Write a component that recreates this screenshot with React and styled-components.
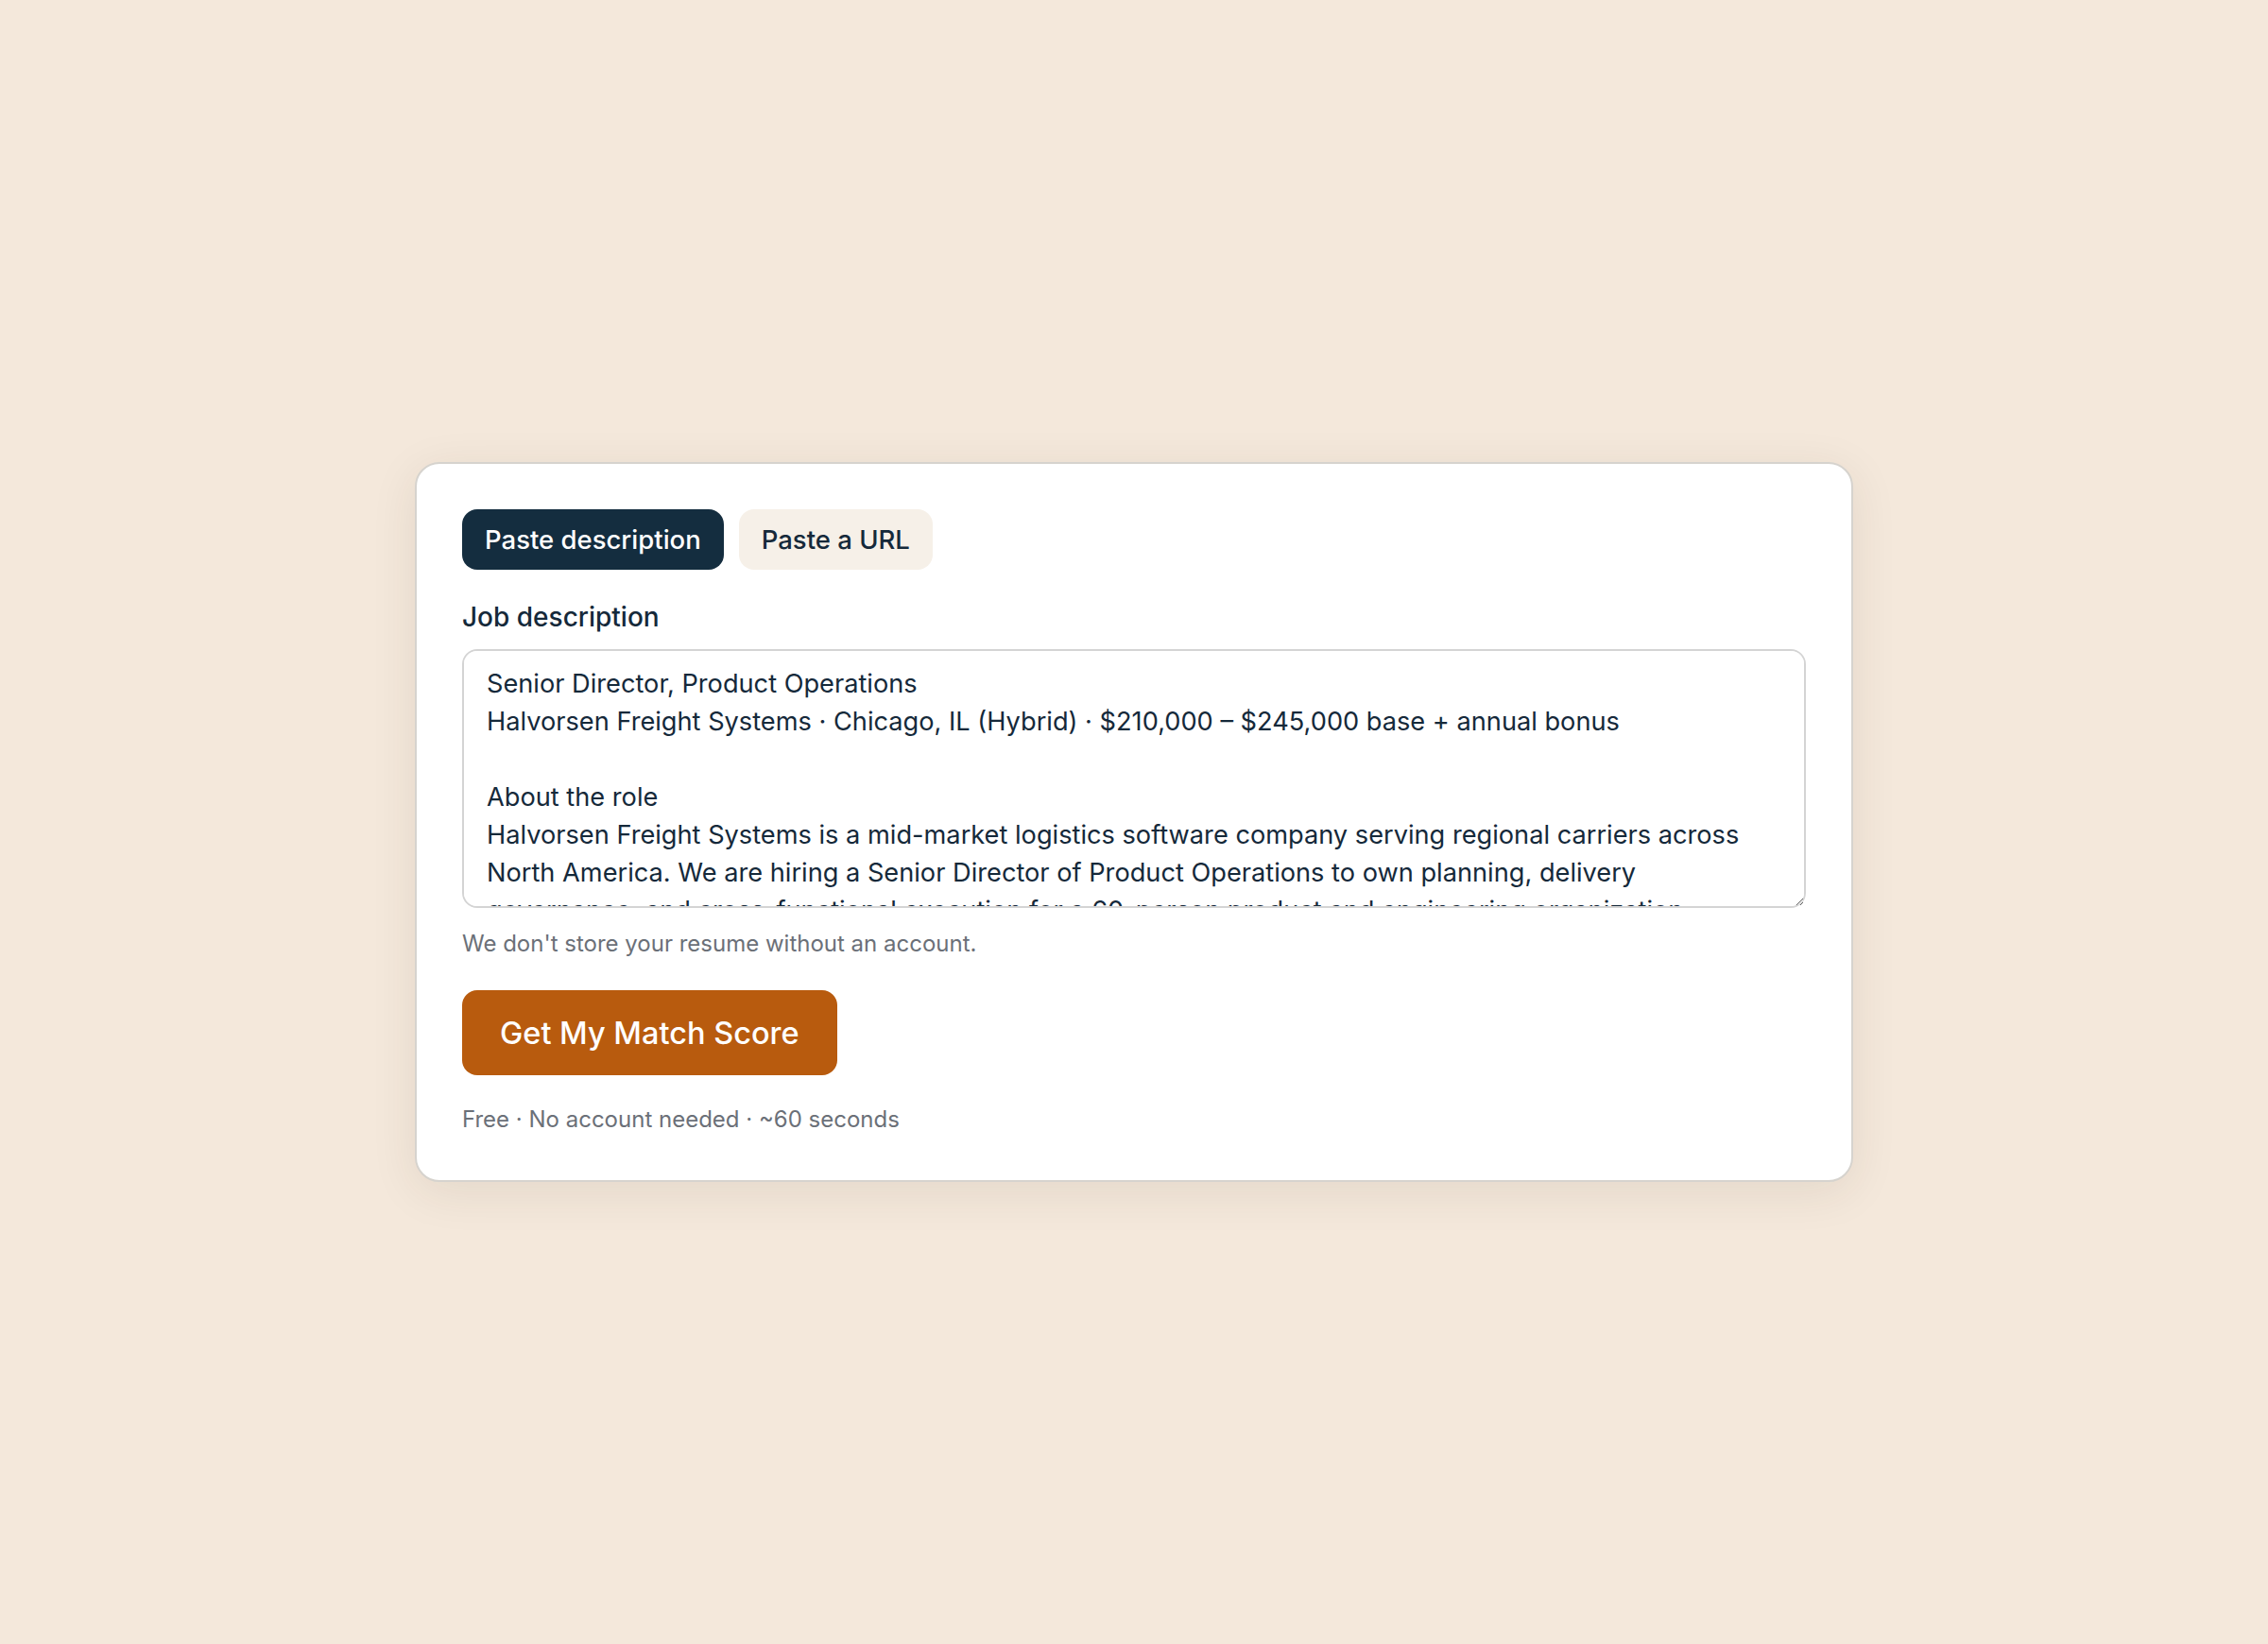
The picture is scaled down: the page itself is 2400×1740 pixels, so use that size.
import React, { useState } from 'react';
import styled, { createGlobalStyle } from 'styled-components';

const GlobalStyle = createGlobalStyle`
  * {
    box-sizing: border-box;
  }

  body {
    margin: 0;
    background: #f4e8db;
    font-family: Inter, 'Noto Sans', 'Liberation Sans', sans-serif;
    color: #15293a;
  }
`;

const JOB_TEXT = `Senior Director, Product Operations
Halvorsen Freight Systems · Chicago, IL (Hybrid) · $210,000 – $245,000 base + annual bonus

About the role
Halvorsen Freight Systems is a mid-market logistics software company serving regional carriers across North America. We are hiring a Senior Director of Product Operations to own planning, delivery governance, and cross-functional execution for a 60-person product and engineering organization.

What you'll do
- Run quarterly planning and roadmap reviews with product, engineering and go-to-market leaders
- Build the operating cadence, metrics and tooling that keep delivery predictable
- Lead a team of program managers and product ops analysts`;

function App() {
  const [mode, setMode] = useState('paste');
  const [description, setDescription] = useState(JOB_TEXT);

  return (
    <Page>
      <GlobalStyle />
      <Card>
        <Tabs>
          <Tab $active={mode === 'paste'} onClick={() => setMode('paste')}>
            Paste description
          </Tab>
          <Tab $active={mode === 'url'} onClick={() => setMode('url')}>
            Paste a URL
          </Tab>
        </Tabs>

        <Label htmlFor="job-description">Job description</Label>
        <JobInput
          id="job-description"
          value={description}
          onChange={(e) => setDescription(e.target.value)}
        />
        <Hint>We don't store your resume without an account.</Hint>

        <SubmitButton type="button">Get My Match Score</SubmitButton>
        <Footnote>Free · No account needed · ~60 seconds</Footnote>
      </Card>
    </Page>
  );
}

const Page = styled.div`
  min-height: 100vh;
  display: flex;
  align-items: center;
  justify-content: center;
`;

const Card = styled.div`
  width: 1522px;
  display: flex;
  flex-direction: column;
  align-items: flex-start;
  padding: 48px;
  background: #ffffff;
  border: 2px solid #d6d3ce;
  border-radius: 26px;
  box-shadow: 0 10px 50px rgba(60, 40, 20, 0.09);
`;

const Tabs = styled.div`
  display: flex;
  gap: 16px;
`;

const Tab = styled.button`
  height: 64px;
  padding: 0 24px;
  border: none;
  border-radius: 16px;
  font-family: inherit;
  font-size: 27.5px;
  font-weight: 500;
  cursor: pointer;
  background: ${(p) => (p.$active ? '#142d3f' : '#f6f0e8')};
  color: ${(p) => (p.$active ? '#ffffff' : '#15293a')};
`;

const Label = styled.label`
  margin-top: 32px;
  margin-bottom: 16px;
  font-size: 28px;
  line-height: 36px;
  font-weight: 500;
`;

const JobInput = styled.textarea`
  width: 100%;
  height: 274px;
  padding: 15px 24px;
  border: 2px solid #d4d4d4;
  border-radius: 16px;
  font-family: inherit;
  font-size: 27.2px;
  line-height: 40px;
  color: #15293a;
  resize: vertical;
  outline: none;
`;

const Hint = styled.p`
  margin: 22px 0 0;
  font-size: 24px;
  line-height: 32px;
  color: #6b7078;
`;

const SubmitButton = styled.button`
  margin-top: 33px;
  height: 90px;
  padding: 0 40px;
  border: none;
  border-radius: 16px;
  background: #b85b0e;
  color: #ffffff;
  font-family: inherit;
  font-size: 32.5px;
  font-weight: 500;
  cursor: pointer;
`;

const Footnote = styled.p`
  margin: 31px 0 0;
  font-size: 24px;
  line-height: 32px;
  color: #6b7078;
`;

export default App;
